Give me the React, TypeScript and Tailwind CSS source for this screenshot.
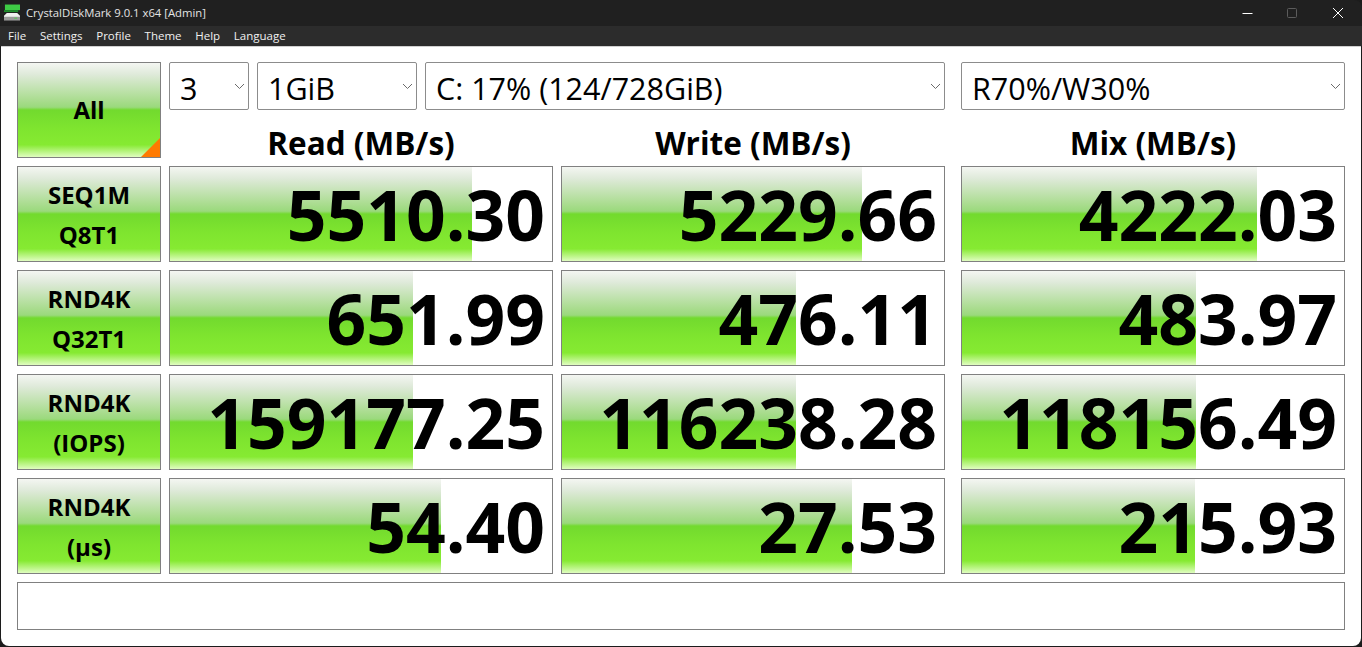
import React from 'react';

const barGradient =
  'bg-[linear-gradient(to_bottom,#f4f6f2_0%,#dfeada_12%,#a9dc8e_40%,#9ad97c_47%,#72da2e_50%,#7fe52f_70%,#86ea32_87%,#e0fdc0_100%)]';

interface Result {
  label: [string, string];
  values: { text: string; bar: number }[];
}

const results: Result[] = [
  {
    label: ['SEQ1M', 'Q8T1'],
    values: [
      { text: '5510.30', bar: 302 },
      { text: '5229.66', bar: 300 },
      { text: '4222.03', bar: 295 },
    ],
  },
  {
    label: ['RND4K', 'Q32T1'],
    values: [
      { text: '651.99', bar: 243 },
      { text: '476.11', bar: 234 },
      { text: '483.97', bar: 234 },
    ],
  },
  {
    label: ['RND4K', '(IOPS)'],
    values: [
      { text: '159177.25', bar: 243 },
      { text: '116238.28', bar: 234 },
      { text: '118156.49', bar: 234 },
    ],
  },
  {
    label: ['RND4K', '(μs)'],
    values: [
      { text: '54.40', bar: 271 },
      { text: '27.53', bar: 290 },
      { text: '215.93', bar: 233 },
    ],
  },
];

const menus = ['File', 'Settings', 'Profile', 'Theme', 'Help', 'Language'];

const AppIcon = () => (
  <svg width="17" height="18" viewBox="0 0 17 18">
    <rect x="1" y="0" width="16" height="6" fill="#3ecb45" />
    <rect x="0" y="6" width="15" height="2" fill="#1f8f2c" />
    <path d="M3 9h11l3 3v2H0v-2z" fill="#f0f0f0" />
    <rect x="0" y="13" width="17" height="4" fill="#9a9a9a" />
    <rect x="11" y="14" width="3" height="1" fill="#49d14a" />
  </svg>
);

const Picker = ({ value, className }: { value: string; className: string }) => (
  <div className={`relative h-12 ${className}`}>
    <select
      defaultValue={value}
      className="h-full w-full appearance-none rounded-[2px] border border-[#8c8c8c] bg-white pl-[10px] pt-[3px] text-[30.5px] text-black outline-none"
    >
      <option value={value}>{value}</option>
    </select>
    <svg
      className="pointer-events-none absolute right-[4px] top-[21px]"
      width="11"
      height="7"
      viewBox="0 0 11 7"
      fill="none"
      stroke="#6b6b6b"
    >
      <path d="M1 1l4.5 4.5L10 1" />
    </svg>
  </div>
);

const Score = ({ text, bar }: { text: string; bar: number }) => (
  <div className="relative h-24 overflow-hidden border border-[#808080] bg-white">
    <div className={`absolute inset-y-0 left-0 ${barGradient}`} style={{ width: bar }} />
    <div className="relative pr-[7px] text-right text-[69.5px] leading-[95px] font-bold text-black">{text}</div>
  </div>
);

const SideButton = ({ children, className }: { children: React.ReactNode; className: string }) => (
  <button
    className={`relative flex w-full flex-col items-center justify-center overflow-hidden border border-[#808080] font-bold text-black ${barGradient} ${className}`}
  >
    {children}
  </button>
);

export default function App() {
  return (
    <div className="h-[647px] w-[1362px] overflow-hidden bg-[#1c1c1c] font-['Open_Sans','Noto_Sans',sans-serif]">
      <div className="flex h-[26px] items-center rounded-t-lg bg-[#202020] text-[11.3px] text-[#e4e4e4]">
        <div className="ml-1 mr-[6px] flex w-4 justify-center">
          <AppIcon />
        </div>
        <span>CrystalDiskMark 9.0.1 x64 [Admin]</span>
        <div className="ml-auto flex items-center">
          <svg className="mr-[33px]" width="12" height="12" viewBox="0 0 12 12" stroke="#ffffff" fill="none">
            <path d="M1.5 6.5h10" />
          </svg>
          <svg className="mr-[34px]" width="12" height="12" viewBox="0 0 12 12" stroke="#5c5c5c" fill="none">
            <rect x="1.5" y="1.5" width="9" height="9" rx="1" />
          </svg>
          <svg className="mr-[18px]" width="12" height="12" viewBox="0 0 12 12" stroke="#ffffff" fill="none">
            <path d="M1 1l10 10M11 1L1 11" />
          </svg>
        </div>
      </div>
      <div className="flex h-5 items-center gap-[13.7px] bg-[#2c2c2c] pl-2 text-[11.5px] text-[#f0f0f0]">
        {menus.map((m) => (
          <span key={m}>{m}</span>
        ))}
      </div>
      <div className="mx-px h-[600px] rounded-b-lg border-t border-t-[#d0d0d0] bg-white pl-4 pt-[15px]">
        <div className="grid grid-cols-[144px_384px_384px_392px] gap-x-2 gap-y-2">
          <SideButton className="h-24 text-[24px]">
            All
            <span className="absolute bottom-0 right-0 h-0 w-0 border-b-[19px] border-l-[19px] border-b-[#ff7a00] border-l-transparent" />
          </SideButton>
          <div className="col-span-2 flex flex-col">
            <div className="flex gap-2">
              <Picker value="3" className="w-20" />
              <Picker value="1GiB" className="w-40" />
              <Picker value="C: 17% (124/728GiB)" className="flex-1" />
            </div>
            <div className="grid h-12 grid-cols-2 gap-x-2 text-center text-[31.5px] leading-[66px] font-bold text-black">
              <div>Read (MB/s)</div>
              <div>Write (MB/s)</div>
            </div>
          </div>
          <div className="ml-2 flex flex-col">
            <Picker value="R70%/W30%" className="w-full" />
            <div className="h-12 text-center text-[31.5px] leading-[66px] font-bold text-black">Mix (MB/s)</div>
          </div>
          {results.map((r) => (
            <React.Fragment key={r.label.join('-')}>
              <SideButton className="h-24 gap-[9px] text-[24px] leading-[31px]">
                <span>{r.label[0]}</span>
                <span>{r.label[1]}</span>
              </SideButton>
              <Score {...r.values[0]} />
              <Score {...r.values[1]} />
              <div className="ml-2">
                <Score {...r.values[2]} />
              </div>
            </React.Fragment>
          ))}
          <div className="col-span-4 h-12 border border-[#808080] bg-white" />
        </div>
      </div>
    </div>
  );
}
